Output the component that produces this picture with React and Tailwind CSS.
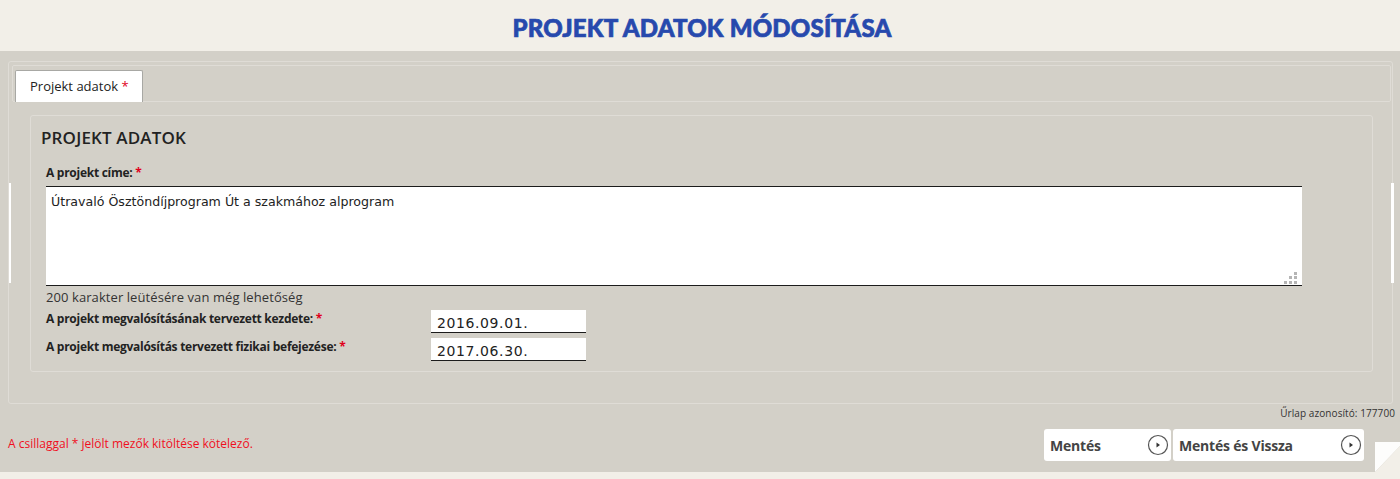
import React from 'react';

const sans = { fontFamily: '"Open Sans", sans-serif' };

function Req() {
  return <span className="text-[#e0001b]">*</span>;
}

function DateRow({ label, value, className }) {
  return (
    <div className={`flex ${className}`}>
      <label className="w-[385px] text-[12px] leading-[16px] font-bold tracking-[-0.27px] text-[#222] pt-[1px]">
        {label} <Req />
      </label>
      <div className="w-[155px] h-[23px] bg-white border-b border-[#1c1c1c] pl-[6px] pt-[4px] text-[14px] leading-[18px] tracking-[0.6px] text-[#222] font-['DejaVu_Sans',sans-serif]">
        {value}
      </div>
    </div>
  );
}

function SaveButton({ label, className }) {
  return (
    <button className={`h-[32px] bg-white rounded-[3px] flex items-center justify-between pl-[6px] pr-[2px] ${className}`}>
      <span className="text-[14px] font-bold tracking-[-0.2px] text-[#444]">{label}</span>
      <svg width="22" height="22" viewBox="0 0 22 22">
        <circle cx="11" cy="11" r="9.5" fill="white" stroke="#555" strokeWidth="1.2" />
        <path d="M9.5 8.5 L13 11 L9.5 13.5 Z" fill="#333" />
      </svg>
    </button>
  );
}

export default function App() {
  return (
    <div className="h-[479px] overflow-hidden flex flex-col bg-[#f2efe8]" style={sans}>
      <header className="h-[51px] shrink-0 flex items-center justify-center pt-[5px] pl-[4px]">
        <h1 className="font-['Lato',sans-serif] font-black text-[24px] tracking-[0.2px] text-[#2749ad] [-webkit-text-stroke:0.7px_#2749ad]">
          PROJEKT ADATOK MÓDOSÍTÁSA
        </h1>
      </header>

      <main className="relative h-[421px] shrink-0 bg-[#d3d0c8] pt-[10px]">
        <div className="absolute left-[9px] top-[132px] w-[2px] h-[100px] bg-white" />
        <div className="absolute left-[1391px] top-[132px] w-[3px] h-[100px] bg-white" />

        <div className="ml-[8px] w-[1385px] h-[343px] border border-[#dfdcd6] rounded-[3px] pt-[3px] pl-[3px] pr-[1px]">
          <div className="h-[37px] border border-[#dfdcd6] rounded-[2px] pl-[2px] flex items-end -mb-px">
            <div className="w-[128px] h-[32px] -mb-px bg-white border border-b-0 border-[#a8a8a4] rounded-t-[2px] pl-[14px] pt-[5px] text-[13px] leading-[20px] text-[#222]">
              Projekt adatok <Req />
            </div>
          </div>

          <section className="ml-[18px] mt-[14px] w-[1343px] h-[257px] border border-[#dfdcd6] rounded-[3px] pl-[15px] pt-[11px]">
            <h2 className="-ml-[5px] text-[17px] leading-[22px] font-semibold tracking-[0.15px] text-[#222]">PROJEKT ADATOK</h2>
            <label className="block mt-[16px] text-[12px] leading-[16px] font-bold tracking-[-0.27px] text-[#222]">
              A projekt címe: <Req />
            </label>
            <div className="relative mt-[5px] w-[1256px] h-[100px] bg-white border-y border-[#1c1c1c] pl-[5px] pt-[5px] text-[12.6px] leading-[20px] text-[#222] font-['DejaVu_Sans',sans-serif]">
              Útravaló Ösztöndíjprogram Út a szakmához alprogram
              <svg className="absolute right-[5px] bottom-[1px]" width="13" height="13" viewBox="0 0 13 13" fill="#b5b5b5">
                <rect x="10" y="1" width="3" height="3" />
                <rect x="5" y="5" width="3" height="3" />
                <rect x="10" y="5" width="3" height="3" />
                <rect x="0" y="10" width="3" height="3" />
                <rect x="5" y="10" width="3" height="3" />
                <rect x="10" y="10" width="3" height="3" />
              </svg>
            </div>
            <p className="mt-[2px] text-[13px] leading-[18px] tracking-[0.08px] text-[#333]">200 karakter leütésére van még lehetőség</p>
            <DateRow className="mt-[4px]" label="A projekt megvalósításának tervezett kezdete:" value="2016.09.01." />
            <DateRow className="mt-[5px]" label="A projekt megvalósítás tervezett fizikai befejezése:" value="2017.06.30." />
          </section>
        </div>

        <p className="mt-[2px] pr-[5px] text-right text-[10px] leading-[14px] tracking-[0.08px] text-[#333]">Űrlap azonosító: 177700</p>

        <div className="flex items-start justify-between mt-[9px] pl-[8px] pr-[36px]">
          <p className="pt-[6px] text-[12px] leading-[18px] text-[#f00f1e]">A csillaggal * jelölt mezők kitöltése kötelező.</p>
          <div className="flex gap-[2px]">
            <SaveButton label="Mentés" className="w-[127px]" />
            <SaveButton label="Mentés és Vissza" className="w-[191px]" />
          </div>
        </div>

        {/* behajtott sarok */}
        <svg className="absolute right-0 bottom-0" width="25" height="30" viewBox="0 0 25 30">
          <path d="M0 0 H25 V4 L0 30 Z" fill="#fdfdfc" />
          <path d="M0 30 L25 4 V30 Z" fill="#f2efe8" />
        </svg>
      </main>
    </div>
  );
}
